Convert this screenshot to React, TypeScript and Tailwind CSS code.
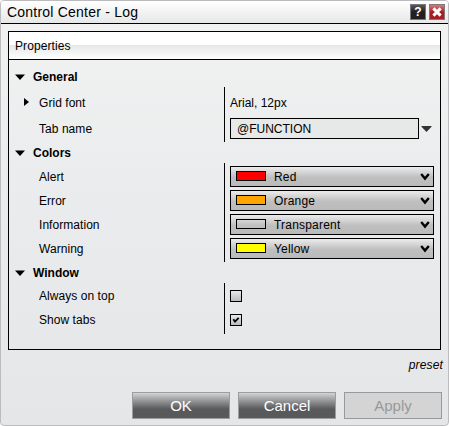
import React from "react";

type RowProps = {
  label: string;
  height: string;
  // Bottom padding shared by the label and the value cell
  pad?: string;
  expandable?: boolean;
  children: React.ReactNode;
};

function Row({ label, height, pad = "", expandable, children }: RowProps) {
  return (
    <div className={`flex ${height}`}>
      <div className="flex w-[30px] shrink-0 items-center pl-[15px]">
        {expandable && (
          <svg className="-mt-[2px]" width="5" height="8" viewBox="0 0 5 8"><path d="M0 0L5 4L0 8Z" fill="#000" /></svg>
        )}
      </div>
      <div className={`flex w-[185px] shrink-0 items-center tracking-[0.05px] ${pad}`}>{label}</div>
      <div className={`flex items-center border-l border-black pl-[5px] ${pad}`}>{children}</div>
    </div>
  );
}

function Section({ title, className }: { title: string; className: string }) {
  return (
    <div className={`flex items-center pl-[6px] font-bold ${className}`}>
      <svg width="10" height="6" viewBox="0 0 10 6"><path d="M0 0.5H10L5 6Z" fill="#000" /></svg>
      <span className="ml-2">{title}</span>
    </div>
  );
}

function Select({ color, name }: { color: string; name: string }) {
  return (
    <div className="flex h-[21px] w-[204px] items-center border border-black bg-linear-to-b from-[#ececec] via-[#bfbfbf] via-55% to-[#bababa] pl-[5px]">
      <span className={`-mt-px h-[10px] w-[30px] border border-black ${color}`} />
      <span className="ml-2 flex-1 tracking-[0.2px]">{name}</span>
      <svg className="mr-[3px]" width="10" height="8" viewBox="0 0 10 8"><path d="M1.2 1L5 5.6L8.8 1" fill="none" stroke="#000" strokeWidth="2.3" /></svg>
    </div>
  );
}

function Checkbox({ checked }: { checked?: boolean }) {
  return (
    <span className="flex h-3 w-3 items-center justify-center border border-black bg-linear-to-b from-[#e8e8e8] to-[#bcbcbc]">
      {checked && (
        <svg width="8" height="8" viewBox="0 0 8 8"><path d="M1.3 3.3L3 5.6L6.7 1.8" fill="none" stroke="#000" strokeWidth="1.8" /></svg>
      )}
    </span>
  );
}

const darkButton =
  "h-[27px] w-[98px] border border-[#9b9d9f] bg-linear-to-b from-[#d4d4d4] via-[#58595b] via-65% to-[#58595b] text-white";

export default function App() {
  return (
    <div className="h-[426px] w-[449px] bg-white font-['Liberation_Sans',Arial,sans-serif] text-[12px] leading-[14px] text-black">
      <div className="flex h-full flex-col overflow-hidden rounded-[4px] border border-[#bcbcbe] bg-linear-to-b from-[#f1f2f1] via-[#eaebed] via-50% to-[#e5e6e8]">
        <div className="flex h-[23px] shrink-0 items-center border-b border-black bg-linear-to-b from-white to-[#e6e7e7] pr-[3px] pl-[6px]">
          <h1 className="flex-1 text-[14px] leading-4 tracking-[0.22px]">Control Center - Log</h1>
          <button className="flex h-4 w-4 items-center justify-center border border-[#77787a] bg-linear-to-b from-[#58585a] via-[#231f20] via-50% to-[#231f20] text-[12px] leading-3 font-bold text-white">?</button>
          <button className="ml-[3px] flex h-4 w-4 items-center justify-center border border-[#85787a] bg-linear-to-b from-[#d37a7d] via-[#a91e24] via-50% to-[#a91e24]">
            <svg width="12" height="12" viewBox="0 0 12 12"><path d="M2.4 2.4L9.6 9.6M9.6 2.4L2.4 9.6" stroke="#fff" strokeWidth="3" /></svg>
          </button>
        </div>

        <div className="mx-[7px] mt-[7px] h-[319px] shrink-0 border border-black">
          <div className="flex h-[28px] items-center border-b border-black bg-linear-to-b from-white from-48% via-[#e6e7e7] via-48% to-white pl-[6px] tracking-[0.1px]">
            Properties
          </div>
          <Section title="General" className="h-[27px] pt-[7px]" />
          <Row label="Grid font" height="h-[31px]" expandable>Arial, 12px</Row>
          <Row label="Tab name" height="h-[24px]" pad="pb-[3px]">
            <div className="flex h-[21px] w-[189px] items-center border border-black bg-[#e7e8e8] pl-[6px]">@FUNCTION</div>
            <svg className="ml-[2px]" width="11" height="6" viewBox="0 0 11 6"><path d="M0.5 0H10.5V0.8L5.5 6L0.5 0.8Z" fill="#333" /></svg>
          </Row>
          <Section title="Colors" className="h-[21px]" />
          <Row label="Alert" height="h-[27px]"><Select color="bg-[#ff0000]" name="Red" /></Row>
          <Row label="Error" height="h-6" pad="pb-[3px]"><Select color="bg-[#ffa500]" name="Orange" /></Row>
          <Row label="Information" height="h-6" pad="pb-[3px]"><Select color="bg-transparent" name="Transparent" /></Row>
          <Row label="Warning" height="h-6" pad="pb-[3px]"><Select color="bg-[#ffff00]" name="Yellow" /></Row>
          <Section title="Window" className="h-[21px]" />
          <Row label="Always on top" height="h-[26px]"><Checkbox /></Row>
          <Row label="Show tabs" height="h-[25px]" pad="pb-[3px]"><Checkbox checked /></Row>
        </div>

        <div className="mt-2 pr-[5px] text-right tracking-[0.15px] italic">preset</div>
        <div className="mt-5 flex justify-end gap-2 pr-[6px] text-[15px] leading-[18px]">
          <button className={darkButton}>OK</button>
          <button className={darkButton}>Cancel</button>
          <button className="h-[27px] w-[98px] border border-[#97999b] bg-[#d4d4d4] text-[#97999b]">Apply</button>
        </div>
      </div>
    </div>
  );
}
